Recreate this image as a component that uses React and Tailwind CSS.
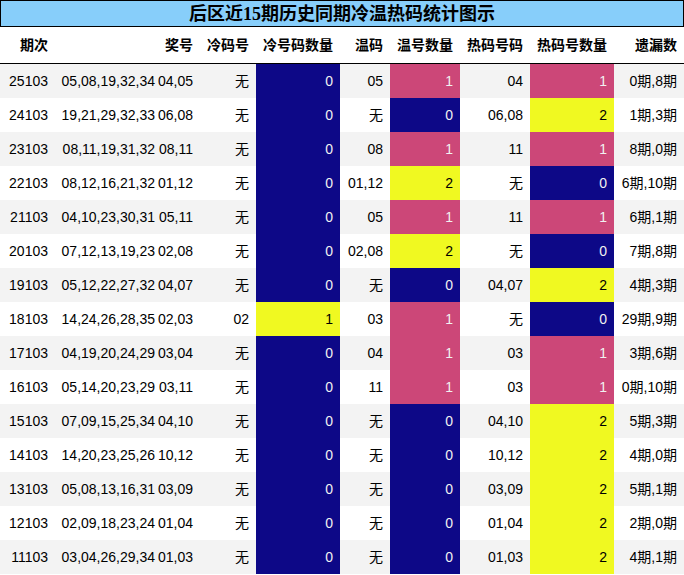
import React from "react";

const rows = [
  ["25103", "05,08,19,32,34", "04,05", "无", 0, "05", 1, "04", 1, "0期,8期"],
  ["24103", "19,21,29,32,33", "06,08", "无", 0, "无", 0, "06,08", 2, "1期,3期"],
  ["23103", "08,11,19,31,32", "08,11", "无", 0, "08", 1, "11", 1, "8期,0期"],
  ["22103", "08,12,16,21,32", "01,12", "无", 0, "01,12", 2, "无", 0, "6期,10期"],
  ["21103", "04,10,23,30,31", "05,11", "无", 0, "05", 1, "11", 1, "6期,1期"],
  ["20103", "07,12,13,19,23", "02,08", "无", 0, "02,08", 2, "无", 0, "7期,8期"],
  ["19103", "05,12,22,27,32", "04,07", "无", 0, "无", 0, "04,07", 2, "4期,3期"],
  ["18103", "14,24,26,28,35", "02,03", "02", 1, "03", 1, "无", 0, "29期,9期"],
  ["17103", "04,19,20,24,29", "03,04", "无", 0, "04", 1, "03", 1, "3期,6期"],
  ["16103", "05,14,20,23,29", "03,11", "无", 0, "11", 1, "03", 1, "0期,10期"],
  ["15103", "07,09,15,25,34", "04,10", "无", 0, "无", 0, "04,10", 2, "5期,3期"],
  ["14103", "14,20,23,25,26", "10,12", "无", 0, "无", 0, "10,12", 2, "4期,0期"],
  ["13103", "05,08,13,16,31", "03,09", "无", 0, "无", 0, "03,09", 2, "5期,1期"],
  ["12103", "02,09,18,23,24", "01,04", "无", 0, "无", 0, "01,04", 2, "2期,0期"],
  ["11103", "03,04,26,29,34", "01,03", "无", 0, "无", 0, "01,03", 2, "4期,1期"],
];

const widths = [
  "w-[54px]",
  "w-[107px]",
  "w-[38px]",
  "w-[56px]",
  "w-[84px]",
  "w-[50px]",
  "w-[70px]",
  "w-[70px]",
  "w-[84px]",
  "w-[70px]",
];

const headers = ["期次", "", "奖号", "冷码号", "冷号码数量", "温码", "温号数量", "热码号码", "热码号数量", "遗漏数"];

function colorFor(col, v) {
  if (col === 4) {
    return v === 0 ? "bg-[#0d0887] text-[#f1f1f1]" : "bg-[#f0f921] text-black";
  }
  if (v === 0) return "bg-[#0d0887] text-[#f1f1f1]";
  if (v === 1) return "bg-[#cc4778] text-[#f1f1f1]";
  return "bg-[#f0f921] text-black";
}

export default function App() {
  return (
    <div
      className="w-[684px] h-[575px] bg-white overflow-hidden"
      style={{ fontFamily: '"Liberation Sans", "Noto Sans CJK SC", sans-serif' }}
    >
      <div
        className="h-[27px] bg-[#87cefa] border border-black flex items-center justify-center text-[18px] font-bold text-black leading-none"
        style={{ fontFamily: '"Liberation Serif", "Noto Sans CJK SC", serif' }}
      >
        后区近15期历史同期冷温热码统计图示
      </div>
      <div className="flex h-[37px] border-b border-black pl-[1px] text-[14px] font-bold text-black">
        {headers.map((h, i) => (
          <div key={i} className={`${widths[i]} flex items-center justify-end pr-[7px]`}>
            {h}
          </div>
        ))}
      </div>
      {rows.map((r, ri) => (
        <div
          key={ri}
          className={`flex h-[34px] pl-[1px] text-[14px] text-black ${ri % 2 === 0 ? "bg-[#f3f3f3]" : "bg-white"}`}
        >
          {r.map((c, ci) => {
            const isCount = ci === 4 || ci === 6 || ci === 8;
            return (
              <div
                key={ci}
                className={`${widths[ci]} flex items-center justify-end pr-[7px] whitespace-nowrap ${isCount ? colorFor(ci, c) : ""}`}
              >
                {c}
              </div>
            );
          })}
        </div>
      ))}
    </div>
  );
}
